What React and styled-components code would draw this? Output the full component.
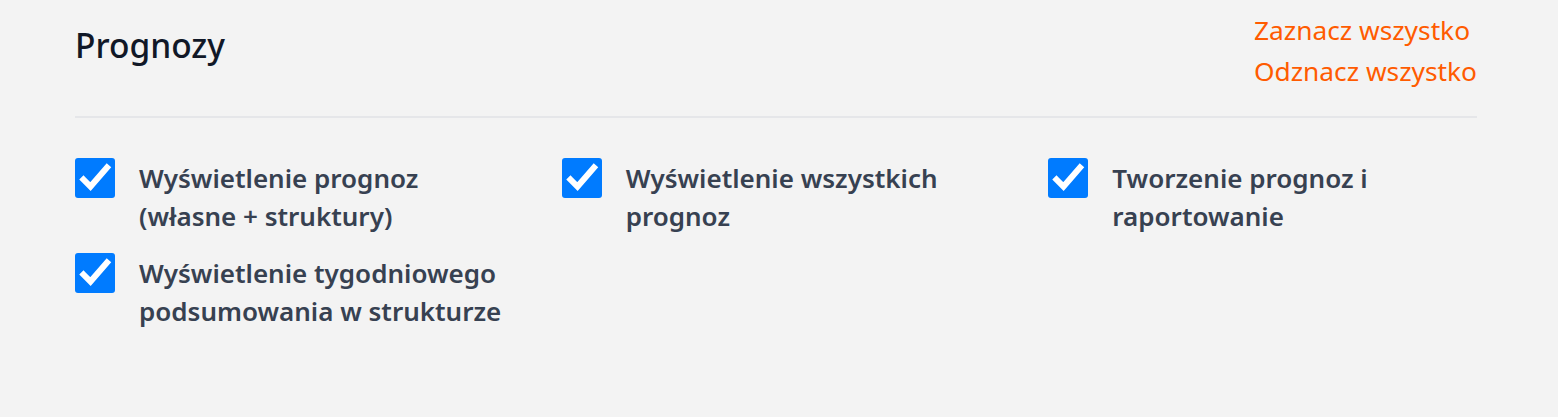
import React, { useState } from 'react';
import styled, { createGlobalStyle } from 'styled-components';

const GlobalStyle = createGlobalStyle`
  html, body {
    margin: 0;
    padding: 0;
    background: #f3f3f3;
  }
  body {
    font-family: 'Noto Sans', 'Open Sans', sans-serif;
  }
`;

const permissions = [
  { id: 'own', label: 'Wyświetlenie prognoz (własne + struktury)' },
  { id: 'all', label: 'Wyświetlenie wszystkich prognoz' },
  { id: 'create', label: 'Tworzenie prognoz i raportowanie' },
  { id: 'weekly', label: 'Wyświetlenie tygodniowego podsumowania w strukturze' },
];

const App = () => {
  const [checked, setChecked] = useState(() =>
    permissions.reduce((acc, p) => ({ ...acc, [p.id]: true }), {})
  );

  const setAll = (value) => {
    setChecked(permissions.reduce((acc, p) => ({ ...acc, [p.id]: value }), {}));
  };

  const toggle = (id) => {
    setChecked((prev) => ({ ...prev, [id]: !prev[id] }));
  };

  return (
    <>
      <GlobalStyle />
      <Section>
        <Header>
          <Title>Prognozy</Title>
          <Actions>
            <ActionLink type="button" onClick={() => setAll(true)}>Zaznacz wszystko</ActionLink>
            <ActionLink type="button" onClick={() => setAll(false)}>Odznacz wszystko</ActionLink>
          </Actions>
        </Header>

        <Grid>
          {permissions.map((p) => (
            <Item key={p.id}>
              <HiddenInput
                type="checkbox"
                checked={checked[p.id]}
                onChange={() => toggle(p.id)}
              />
              <Box $checked={checked[p.id]}>
                {checked[p.id] && (
                  <svg width="40" height="40" viewBox="0 0 40 40" fill="none">
                    <path
                      d="M8.5 21.5 L15.5 28.5 L32 9.5"
                      stroke="#fff"
                      strokeWidth="6"
                      strokeLinecap="square"
                      strokeLinejoin="miter"
                    />
                  </svg>
                )}
              </Box>
              <Label>{p.label}</Label>
            </Item>
          ))}
        </Grid>
      </Section>
    </>
  );
};

// Styled components
const Section = styled.div`
  padding: 10px 81px 0 75px;
`;

const Header = styled.div`
  display: flex;
  justify-content: space-between;
  align-items: flex-start;
  padding-bottom: 24px;
  border-bottom: 2px solid #e5e6e9;
`;

const Title = styled.h2`
  margin: 14px 0 0;
  font-size: 33.5px;
  line-height: 42px;
  font-weight: 500;
  color: #111827;
`;

const Actions = styled.div`
  display: flex;
  flex-direction: column;
  align-items: flex-start;
`;

const ActionLink = styled.button`
  background: none;
  border: none;
  padding: 0;
  font-family: inherit;
  font-size: 26.3px;
  line-height: 41px;
  color: #ff5b00;
  cursor: pointer;
  text-align: left;
`;

const Grid = styled.div`
  display: grid;
  grid-template-columns: repeat(3, 1fr);
  column-gap: 58px;
  row-gap: 18px;
  margin-top: 40px;
`;

const Item = styled.label`
  display: flex;
  align-items: flex-start;
  gap: 24px;
  cursor: pointer;
`;

const HiddenInput = styled.input`
  position: absolute;
  opacity: 0;
  width: 0;
  height: 0;
`;

const Box = styled.span`
  flex: 0 0 40px;
  width: 40px;
  height: 40px;
  border-radius: 3px;
  background: ${(p) => (p.$checked ? '#007bff' : '#ffffff')};
  border: ${(p) => (p.$checked ? 'none' : '2px solid #9ca3af')};
  box-sizing: border-box;
  display: flex;
`;

const Label = styled.span`
  font-size: 26px;
  line-height: 38px;
  font-weight: 600;
  color: #374151;
  padding-top: 1px;
`;

export default App;
